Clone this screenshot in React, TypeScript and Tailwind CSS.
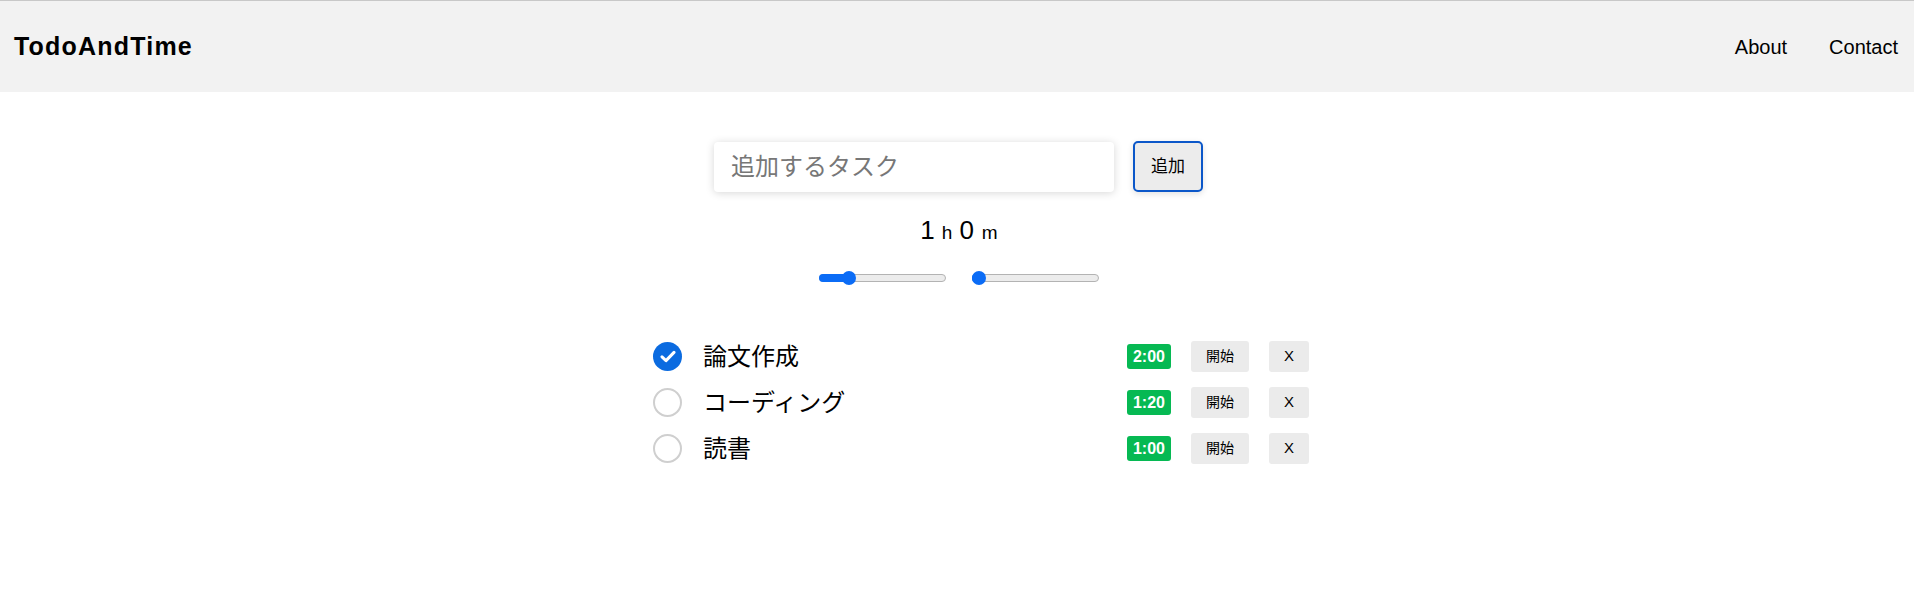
import React, { useState } from 'react';

type Task = { id: number; name: string; minutes: number; done: boolean };

const initialTasks: Task[] = [
  { id: 1, name: '論文作成', minutes: 120, done: true },
  { id: 2, name: 'コーディング', minutes: 80, done: false },
  { id: 3, name: '読書', minutes: 60, done: false },
];

const formatTime = (m: number) => `${Math.floor(m / 60)}:${String(m % 60).padStart(2, '0')}`;

const Slider: React.FC<{ value: number; max: number; onChange: (v: number) => void }> = ({ value, max, onChange }) => {
  const ratio = value / max;
  const thumbLeft = ratio * 113;
  return (
    <div
      className="relative flex h-[14px] w-[127px] cursor-pointer items-center"
      onClick={(e) => {
        const rect = e.currentTarget.getBoundingClientRect();
        const r = Math.min(1, Math.max(0, (e.clientX - rect.left - 7) / 113));
        onChange(Math.round(r * max));
      }}
    >
      <div className="h-[8px] w-full rounded-full border border-[#b3b3b3] bg-[#ececec]" />
      <div
        className="absolute left-0 top-[3px] h-[8px] rounded-full bg-[#0b6cf6]"
        style={{ width: thumbLeft + 7 }}
      />
      <div
        className="absolute top-0 h-[14px] w-[14px] rounded-full bg-[#0b6cf6]"
        style={{ left: thumbLeft }}
      />
    </div>
  );
};

const Check: React.FC<{ done: boolean; onClick: () => void }> = ({ done, onClick }) =>
  done ? (
    <button onClick={onClick} className="flex h-[29px] w-[29px] items-center justify-center rounded-full bg-[#0b6be0]">
      <svg width="16" height="13" viewBox="0 0 16 13" fill="none">
        <path d="M2 6.8 L6 10.6 L14 2.4" stroke="white" strokeWidth="3" strokeLinecap="round" strokeLinejoin="round" />
      </svg>
    </button>
  ) : (
    <button onClick={onClick} className="h-[29px] w-[29px] rounded-full border-2 border-[#cfcfcf] bg-white" />
  );

const App: React.FC = () => {
  const [tasks, setTasks] = useState<Task[]>(initialTasks);
  const [text, setText] = useState('');
  const [hours, setHours] = useState(1);
  const [mins, setMins] = useState(0);

  const addTask = (e: React.FormEvent) => {
    e.preventDefault();
    if (!text.trim()) return;
    setTasks([...tasks, { id: Date.now(), name: text, minutes: hours * 60 + mins, done: false }]);
    setText('');
  };

  return (
    <div className="min-h-screen bg-white font-['Liberation_Sans','Noto_Sans_CJK_JP',sans-serif] text-black">
      {/* Header */}
      <header className="flex h-[92px] items-center justify-between border-t border-[#c8c8c8] bg-[#f2f2f2] pl-[14px] pr-[16px]">
        <h1 className="text-[25px] font-bold tracking-[1.2px]">TodoAndTime</h1>
        <nav className="flex items-center gap-[42px] text-[20px]">
          <a href="#" className="hover:underline">About</a>
          <a href="#" className="hover:underline">Contact</a>
        </nav>
      </header>

      <main className="flex flex-col items-center">
        {/* Input */}
        <form onSubmit={addTask} className="ml-[3px] mt-[49px] flex items-center gap-[19px]">
          <input
            value={text}
            onChange={(e) => setText(e.target.value)}
            placeholder="追加するタスク"
            className="h-[50px] w-[400px] rounded-[4px] bg-white pl-[17px] text-[24px] shadow-[0_1px_8px_rgba(0,0,0,0.16)] outline-none placeholder:text-[#777]"
          />
          <button
            type="submit"
            className="h-[51px] w-[70px] rounded-[5px] border-2 border-[#0b57c9] bg-[#ececec] text-[17px] shadow-[0_2px_6px_rgba(0,0,0,0.12)]"
          >
            追加
          </button>
        </form>

        {/* Time */}
        <div className="ml-[4px] mt-[25px] flex items-baseline leading-none">
          <span className="text-[26px]">{hours}</span>
          <span className="ml-[7px] text-[19px]">h</span>
          <span className="ml-[7px] text-[26px]">{mins}</span>
          <span className="ml-[8px] text-[19px]">m</span>
        </div>

        <div className="ml-[4px] mt-[28px] flex items-center gap-[26px]">
          <Slider value={hours} max={5} onChange={setHours} />
          <Slider value={mins} max={59} onChange={setMins} />
        </div>

        {/* List */}
        <ul className="mt-[56px] flex w-[704px] flex-col gap-[15px] pl-[48px]">
          {tasks.map((t) => (
            <li key={t.id} className="flex h-[31px] items-center">
              <Check done={t.done} onClick={() => setTasks(tasks.map((x) => (x.id === t.id ? { ...x, done: !x.done } : x)))} />
              <span className="ml-[21px] flex-1 text-[24px]">{t.name}</span>
              <span className="rounded-[3px] bg-[#06b953] px-[6px] py-[2px] text-[16px] font-bold leading-[21px] text-white">
                {formatTime(t.minutes)}
              </span>
              <button className="ml-[20px] h-[31px] w-[58px] rounded-[3px] bg-[#ebebeb] text-[14px]">開始</button>
              <button
                onClick={() => setTasks(tasks.filter((x) => x.id !== t.id))}
                className="ml-[20px] h-[31px] w-[40px] rounded-[3px] bg-[#ebebeb] text-[15px]"
              >
                X
              </button>
            </li>
          ))}
        </ul>
      </main>
    </div>
  );
};

export default App;
